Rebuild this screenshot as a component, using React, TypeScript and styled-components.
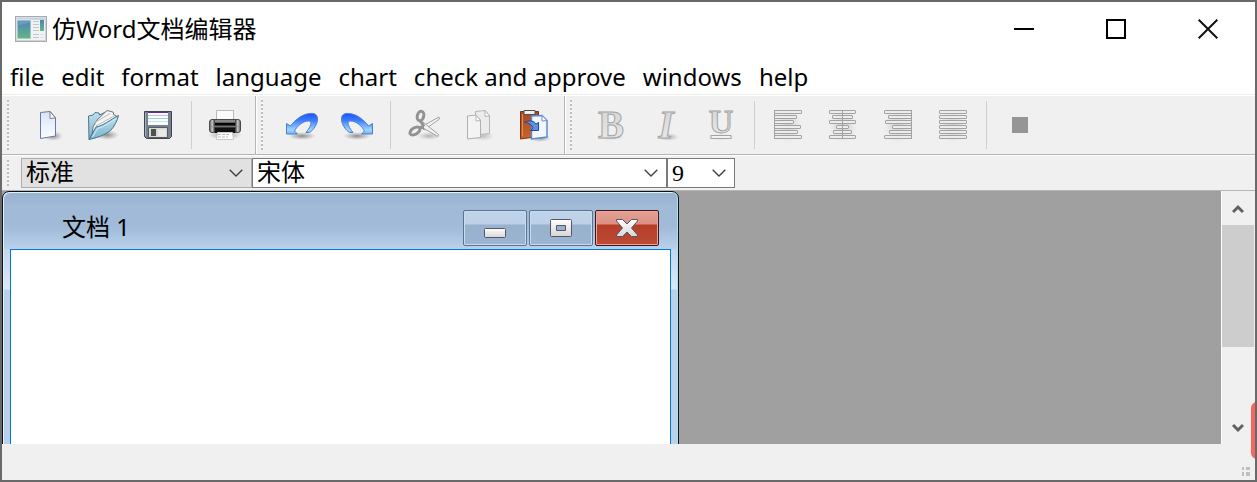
import React from 'react';
import styled, { createGlobalStyle, css } from 'styled-components';

const GlobalStyle = createGlobalStyle`
  *, *::before, *::after { box-sizing: border-box; }
  body { margin: 0; }
  button, select { font: inherit; color: inherit; }
`;

const AppWindow = styled.div`
  font-family: "Noto Sans", "Noto Sans CJK SC", sans-serif;
  position: relative;
  display: flex;
  flex-direction: column;
  height: 100vh;
  border: 2px solid #696969;
  background: #f0f0f0;
  color: #000;
  overflow: hidden;
`;

const SharedDefs = styled.svg`
  position: absolute;
`;

const TitleBar = styled.header`
  display: flex;
  align-items: center;
  height: 58px;
  flex: none;
  padding: 0 1px 4px 13px;
  background: #fff;
`;

const Title = styled.h1`
  flex: 1;
  margin: 0 0 0 5px;
  font-size: 24px;
  line-height: 32px;
  font-weight: 400;
`;

const CaptionButton = styled.button`
  display: grid;
  place-items: center;
  width: 92px;
  height: 54px;
  padding: 0;
  border: 0;
  background: none;
`;

const MenuBar = styled.nav`
  display: flex;
  gap: 17px;
  height: 34px;
  flex: none;
  padding: 0 8px;
  background: #fff;
`;

const MenuItem = styled.button`
  padding: 0;
  border: 0;
  background: none;
  font-size: 24px;
  line-height: 34px;
  white-space: nowrap;
`;

const MenuEdge = styled.div`
  flex: none;
  height: 1px;
  background: #eee;
`;

const ToolRow = styled.div`
  display: flex;
  flex: none;
  padding-left: 1px;
  border-top: 1px solid #fff;
  border-bottom: 1px solid #b4b6b4;
`;

const ToolGroup = styled.div<{ $last?: boolean }>`
  display: flex;
  align-items: center;
  height: 58px;
  ${p => !p.$last && css`
    padding-right: 3px;
    border-right: 1px solid #b4b6b4;
    box-shadow: 1px 0 0 #fff;
    margin-right: 1px;
  `}
`;

const Grip = styled.span<{ $h: number }>`
  width: 2px;
  height: ${p => p.$h}px;
  margin: 0 11px 0 4px;
  background: repeating-linear-gradient(to bottom, #bebebe 0 2px, #f7f7f7 2px 4px);
`;

const ToolButton = styled.button`
  display: grid;
  place-items: center;
  width: 55px;
  height: 50px;
  padding: 0;
  border: 0;
  background: none;
  svg { display: block; overflow: visible; }
`;

const Separator = styled.span`
  width: 1px;
  height: 48px;
  margin: 0 5px 0 6px;
  background: #cfcfcf;
`;

const FormatGroup = styled.div`
  display: flex;
  flex: 1;
  align-items: center;
  height: 34px;
`;

const ComboList = styled.div`
  display: flex;
  flex: 1;
  padding-left: 1px;
`;

const Combo = styled.span<{ $w: number; $flat?: boolean }>`
  display: grid;
  align-items: center;
  flex: 0 1 ${p => p.$w}px;
  height: 30px;
  border: 1px solid ${p => (p.$flat ? '#adadad' : '#7a7a7a')};
  background: ${p => (p.$flat ? '#e1e1e1' : '#fff')};
  > * { grid-area: 1 / 1; }
  svg { justify-self: end; margin-right: 8px; pointer-events: none; }
`;

const Select = styled.select`
  appearance: none;
  width: 100%;
  height: 28px;
  padding: 0 0 0 4px;
  border: 0;
  background: none;
  font-family: "Liberation Serif", "Noto Sans CJK SC", serif;
  font-size: 24px;
  line-height: 28px;
`;

const Workspace = styled.main`
  display: flex;
  flex: 1;
  min-height: 0;
  padding-right: 1px;
`;

const Desktop = styled.div`
  position: relative;
  flex: 1;
  overflow: hidden;
  background: #a0a0a0;
  border-right: 1px solid #fff;
`;

const DocWindow = styled.section`
  position: absolute;
  left: 0;
  top: 0;
  width: 677px;
  height: 520px;
  padding: 0 7px;
  border: 1px solid #10141a;
  border-radius: 7px 7px 0 0;
  box-shadow: inset 1px 1px 0 #dff1fb, inset -1px 0 0 #a9e2f3;
  background: linear-gradient(to bottom, #98b3d0 0, #a0bad8 16px, #a0bad8 34px, #b9d1ea 57px,
    #c4d8ee 58px, #dce8f5 97px, #b9d1ea 98px);
`;

const DocCaption = styled.div`
  display: flex;
  gap: 2px;
  height: 57px;
  padding: 18px 12px 0 52px;
`;

const DocTitle = styled.h2`
  flex: 1;
  margin: 0;
  font-size: 24px;
  line-height: 34px;
  font-weight: 400;
`;

const DocButton = styled.button<{ $close?: boolean }>`
  display: grid;
  place-items: center;
  width: 64px;
  height: 36px;
  padding: 0;
  border: 1px solid ${p => (p.$close ? '#43131a' : '#5c7390')};
  border-radius: 2px;
  box-shadow: inset 0 0 0 1px ${p => (p.$close ? '#e9a79c' : '#c9dcf0')};
  background: ${p => p.$close
    ? 'linear-gradient(#e3a195 0, #de8f83 13px, #b63e29 14px, #bb4a34 100%)'
    : 'linear-gradient(#bfd3ea 0, #bcd0e7 13px, #98b1cd 14px, #9bb4d1 100%)'};
`;

const Page = styled.div`
  height: 460px;
  border: 1px solid #0078d7;
  background: #fff;
  outline: none;
`;

const ScrollBar = styled.div`
  display: flex;
  flex-direction: column;
  width: 32px;
  background: #f0f0f0;
`;

const ScrollButton = styled.button`
  display: grid;
  place-items: center;
  height: 34px;
  padding: 0;
  border: 0;
  background: none;
`;

const ScrollTrack = styled.div`
  flex: 1;
`;

const ScrollThumb = styled.div`
  height: 66%;
  background: #cdcdcd;
`;

const StatusBar = styled.footer`
  display: flex;
  align-items: flex-end;
  justify-content: flex-end;
  flex: none;
  height: 36px;
  padding: 4px 5px;
`;

const SideBadge = styled.span`
  position: absolute;
  right: -2px;
  bottom: 21px;
  width: 6px;
  height: 57px;
  border-radius: 6px 0 0 6px;
  background: #f4685f;
`;

const Chevron = () => (
  <svg width="14" height="8" viewBox="0 0 14 8" aria-hidden="true">
    <path d="M.7.8 7 7 13.3.8" fill="none" stroke="#404040" strokeWidth="1.4" />
  </svg>
);

const Icon = ({ children }: { children: React.ReactNode }) => (
  <svg width="36" height="36" viewBox="0 0 36 36" aria-hidden="true">{children}</svg>
);

const Shadow = ({ cx = 18, cy = 31, rx = 13, ry = 3, o = 1 }) => (
  <ellipse cx={cx} cy={cy} rx={rx} ry={ry} fill="url(#shade)" opacity={o} />
);

const Defs = () => (
  <SharedDefs width="0" height="0" aria-hidden="true">
    <defs>
      <radialGradient id="shade">
        <stop offset="0" stopColor="#555" stopOpacity=".65" />
        <stop offset="1" stopColor="#777" stopOpacity="0" />
      </radialGradient>
      <linearGradient id="sheet" x1="0" y1="0" x2="0" y2="1">
        <stop offset="0" stopColor="#d9e4fb" /><stop offset="1" stopColor="#fbfdff" />
      </linearGradient>
      <linearGradient id="folder" x1="0" y1="0" x2="0" y2="1">
        <stop offset="0" stopColor="#bfe0ef" /><stop offset="1" stopColor="#79b4d0" />
      </linearGradient>
      <linearGradient id="arrow" x1="0" y1="0" x2="0" y2="1">
        <stop offset="0" stopColor="#1c50ff" /><stop offset=".35" stopColor="#3f7dff" />
        <stop offset=".8" stopColor="#9fd6ff" /><stop offset="1" stopColor="#6fb0fa" />
      </linearGradient>
      <linearGradient id="drum" x1="0" y1="0" x2="1" y2="0">
        <stop offset="0" stopColor="#55585c" /><stop offset=".09" stopColor="#c9c9c9" />
        <stop offset=".17" stopColor="#3a3a3a" /><stop offset=".83" stopColor="#3a3a3a" />
        <stop offset=".91" stopColor="#c9c9c9" /><stop offset="1" stopColor="#55585c" />
      </linearGradient>
      <linearGradient id="grey" x1="0" y1="0" x2="0" y2="1">
        <stop offset="0" stopColor="#d2d2d2" /><stop offset="1" stopColor="#ececec" />
      </linearGradient>
      <linearGradient id="wood" x1="0" y1="0" x2="0" y2="1">
        <stop offset="0" stopColor="#a94a1c" /><stop offset="1" stopColor="#c9642a" />
      </linearGradient>
      <linearGradient id="glyph" x1="0" y1="0" x2="0" y2="1">
        <stop offset="0" stopColor="#fff" /><stop offset="1" stopColor="#d6d6d6" />
      </linearGradient>
      <linearGradient id="pane" x1="0" y1="0" x2="0" y2="1">
        <stop offset="0" stopColor="#4a86b4" /><stop offset="1" stopColor="#67b487" />
      </linearGradient>
    </defs>
  </SharedDefs>
);

const AppLogo = () => (
  <svg width="32" height="26" viewBox="0 0 32 26" aria-hidden="true">
    <rect x=".5" y=".5" width="31" height="25" fill="#e6e9ec" stroke="#a5abb3" />
    <rect x="1.5" y="1.5" width="29" height="2" fill="#c9d3dd" />
    <path d="M1.500 3.500h29v21h-29z" fill="#f1f2f4" stroke="#d0d4d8" />
    <path d="M2 4h14v19H2z" fill="url(#pane)" stroke="#e2efef" />
    <path d="M2.500 9c5 0 8-2 13-2V5h-13z" fill="#78a8c8" opacity=".6" />
    <path d="M18 5.500h6M18 8.500h6M18 11.500h6M18 14.500h6M18 18.500h6M18 21.500h6" stroke="#c3c6ca" />
    <rect x="25" y="4" width="4" height="11" fill="url(#pane)" />
    <path d="M25 18.500h4M25 21.500h4" stroke="#dde0e3" />
  </svg>
);

const NewIcon = () => (
  <Icon>
    <Shadow cx={23} cy={29} rx={10} ry={5} />
    <path d="M10.500 5.500 20 4.500l5.500 6v18.500L10.500 31.500z" fill="url(#sheet)" stroke="#6479a3" />
    <path d="M20 4.500v7l5.500-.5z" fill="#fff" stroke="#7c7f8a" />
  </Icon>
);

const OpenIcon = () => (
  <Icon>
    <Shadow cx={22} cy={28} rx={12} ry={5} />
    <path d="M3.500 9 8 8l2-2.500 4 .5.500 2 7-3.500 2 3v9L4 32.500z" fill="url(#folder)" stroke="#4f7687" />
    <path d="M8 20 12 13l10-9.500L28 5l1 3 2.500 1-7 12L7 29z" fill="#f4f4f4" stroke="#777" />
    <path d="M10 15.500 25 6.500M11 19 29 9" stroke="#bbb" fill="none" />
    <path d="M4 32.500 11 20c7-1 14-7 22.500-11.500-1 5-4.500 11.500-8 15C19 29 10 31 4 32.500z" fill="url(#folder)" stroke="#416f84" />
    <path d="M7.500 30 12.500 21.500C19 20 25 15 31.500 11.500" stroke="#d6f1fb" fill="none" />
  </Icon>
);

const SaveIcon = () => (
  <Icon>
    <path d="M4.500 4.500h27v25l-2 2h-23l-2-2z" fill="#77808f" stroke="#3f4652" />
    <path d="M5.500 6v23" stroke="#a8b0bc" />
    <rect x="8" y="5" width="20" height="13" fill="#fafafa" />
    <rect x="8" y="5" width="20" height="1" fill="#5b2db8" />
    <path d="M8 8.500h20" stroke="#c4bddf" /><path d="M8 11.500h20" stroke="#8fd8cd" /><path d="M8 14.500h20" stroke="#c9e4e4" />
    <path d="M8.500 20.500h19v10h-19z" fill="#d9d9d6" stroke="#555c66" />
    <rect x="11" y="22" width="5" height="7" fill="#50524f" />
    <path d="M18 22.500h8v7h-8z" fill="#e9e9e6" />
  </Icon>
);

const PrintIcon = () => (
  <Icon>
    <Shadow cy={28} rx={17} ry={5} />
    <path d="M9.500 3.500h17v12h-17z" fill="#fafafa" stroke="#b9b9b9" />
    <rect x="2.5" y="12.5" width="31" height="13" rx="2.5" fill="url(#drum)" stroke="#4a4a4a" />
    <path d="M8 13h20v2.500H8z" fill="#888" />
    <path d="M8 16h20v2H8z" fill="#050505" />
    <path d="M3 19.500h30" stroke="#8c8c8c" opacity=".7" />
    <path d="M8 21h20v5H8z" fill="#111" />
    <path d="M10.500 25.500h15l1 7h-17z" fill="#fff" stroke="#c8c8c8" />
    <path d="M11 27.500h12M11 30h10" stroke="#bbb" strokeDasharray="3 1" />
  </Icon>
);

const UndoShape = () => (
  <>
    <Shadow cx={18} cy={29} rx={14} ry={4} />
    <path d="M2.500 16.500v10.500h11L10.500 24C13 19 19 14 24.500 14c4 .500 3 4.500-2.500 11.500h3.500C30 22.500 33.500 17 33.500 12c0-5-3.500-6-8-5.500C17.500 7.500 11 13 6.500 19z" fill="url(#arrow)" stroke="#4f7fc9" strokeLinejoin="round" />
  </>
);
const UndoIcon = () => <Icon><UndoShape /></Icon>;
const RedoIcon = () => <Icon><g transform="matrix(-1 0 0 1 36 0)"><UndoShape /></g></Icon>;

const CutIcon = () => (
  <Icon>
    <Shadow cx={23} cy={29} rx={12} ry={4} o={0.6} />
    <path d="M15 20 33 10l.5 2L18 23z" fill="#f5f5f5" stroke="#a0a0a0" />
    <path d="M17 15 32.500 27.500 31.500 29.500 15.500 20z" fill="#f0f0f0" stroke="#a0a0a0" />
    <g fill="none" stroke="#929292" strokeWidth="3">
      <ellipse cx="14.5" cy="9" rx="3.2" ry="4.8" transform="rotate(15 14.5 9)" />
      <path d="M14 13.500 18 19.500" />
      <ellipse cx="9" cy="24" rx="5.6" ry="3.2" transform="rotate(-32 9 24)" />
      <path d="M13 20.500h5" />
    </g>
  </Icon>
);

const CopyIcon = () => (
  <Icon>
    <Shadow cx={22} cy={29} rx={11} ry={5} o={0.5} />
    <path d="M14.500 4.500 24 3.500l4.500 5v18L14.500 28z" fill="#ececec" stroke="#b5b5b5" />
    <path d="M24 3.500v6l4.500-.5z" fill="#fff" stroke="#b5b5b5" />
    <path d="M6.500 9 15 8l4.500 5v17.500L6.500 32z" fill="#f3f3f3" stroke="#b0b0b0" />
    <path d="M15 8v6l4.500-.5z" fill="#fff" stroke="#b5b5b5" />
  </Icon>
);

const PasteIcon = () => (
  <Icon>
    <Shadow cx={24} cy={31} rx={11} ry={4} />
    <path d="M4.500 4.500h18v25L4.500 32z" fill="url(#wood)" stroke="#7a3413" />
    <path d="M6.500 7v22" stroke="#e08a4c" />
    <path d="M8 3.500h11v4H8z" fill="#f0f0ec" stroke="#4e4e4e" />
    <path d="M15.500 9 26 8.500l5 5V30l-15.500 2z" fill="#f2f6ff" stroke="#5b8bd6" strokeWidth="1.5" />
    <path d="M26 8.500v5.500l5-.5z" fill="#fff" stroke="#7492c2" />
    <path d="M8.500 15c5-2 10-1 11.500 2l2.500-1.500v8h-8l2.500-2.500c-1-3-4-5-8.500-6z" fill="#5f8fe0" stroke="#24479a" />
  </Icon>
);

const Letter = styled.text`
  font-family: "Liberation Serif", serif;
  font-weight: 700;
  fill: url(#grey);
  stroke: #a3a3a3;
  stroke-width: 1px;
  text-anchor: middle;
`;

const BoldIcon = () => (
  <Icon><Shadow cy={30} o={0.7} /><Letter x="18" y="31" fontSize="39">B</Letter></Icon>
);
const ItalicIcon = () => (
  <Icon><Shadow cx={20} cy={30} rx={11} ry={4} o={0.7} /><Letter x="18" y="31" fontSize="39" fontStyle="italic">I</Letter></Icon>
);
const UnderlineIcon = () => (
  <Icon>
    <Shadow cy={30} o={0.7} />
    <Letter x="18" y="26" fontSize="34">U</Letter>
    <rect x="8" y="28.5" width="20" height="3" fill="#f2f2f2" stroke="#a3a3a3" />
  </Icon>
);

const AlignIcon = ({ rows, axis }: { rows: [number, number][]; axis?: number }) => (
  <Icon>
    <Shadow cy={19} rx={14} ry={17} o={0.35} />
    {rows.map(([x, w], i) => (
      <rect key={i} x={x + 0.5} y={3.5 + i * 5} width={w} height="3" rx=".5" fill="#ededed" stroke="#a2a2a2" />
    ))}
    {axis !== undefined && <path d={`M${axis + 0.5} 3v29`} stroke="#a2a2a2" />}
  </Icon>
);

const AlignLeft = () => <AlignIcon axis={4} rows={[[4, 27], [4, 22], [4, 19], [4, 26], [4, 23], [4, 27]]} />;
const AlignCenter = () => <AlignIcon axis={17} rows={[[4, 26], [7, 20], [4, 26], [11, 12], [8, 18], [4, 26]]} />;
const AlignRight = () => <AlignIcon axis={31} rows={[[4, 27], [8, 23], [5, 26], [12, 19], [9, 22], [4, 27]]} />;
const AlignJustify = () => <AlignIcon rows={[[4, 27], [4, 27], [4, 27], [4, 27], [4, 27], [4, 27]]} />;

const ColorIcon = () => (
  <svg width="16" height="16" aria-hidden="true"><rect width="16" height="16" fill="#959595" /></svg>
);

type Tool = { label: string; icon: React.ComponentType; off?: boolean } | null;

const groups: { name: string; tools: Tool[] }[] = [
  { name: 'File', tools: [
    { label: 'New', icon: NewIcon }, { label: 'Open', icon: OpenIcon }, { label: 'Save', icon: SaveIcon },
    null, { label: 'Print', icon: PrintIcon },
  ] },
  { name: 'Edit', tools: [
    { label: 'Undo', icon: UndoIcon }, { label: 'Redo', icon: RedoIcon }, null,
    { label: 'Cut', icon: CutIcon, off: true }, { label: 'Copy', icon: CopyIcon, off: true }, { label: 'Paste', icon: PasteIcon },
  ] },
  { name: 'Format', tools: [
    { label: 'Bold', icon: BoldIcon, off: true }, { label: 'Italic', icon: ItalicIcon, off: true },
    { label: 'Underline', icon: UnderlineIcon, off: true }, null,
    { label: 'Align left', icon: AlignLeft, off: true }, { label: 'Align center', icon: AlignCenter, off: true },
    { label: 'Align right', icon: AlignRight, off: true }, { label: 'Justify', icon: AlignJustify, off: true }, null,
    { label: 'Text color', icon: ColorIcon, off: true },
  ] },
];

const menus = ['file', 'edit', 'format', 'language', 'chart', 'check and approve', 'windows', 'help'];

const combos = [
  { label: 'Style', value: '标准', width: 231, flat: true },
  { label: 'Font', value: '宋体', width: 415 },
  { label: 'Size', value: '9', width: 68 },
];

const ScrollArrow = ({ down }: { down?: boolean }) => (
  <svg width="12" height="12" viewBox="0 0 12 12" aria-hidden="true">
    <path d={down ? 'M1 4 6 9 11 4' : 'M1 10 6 5 11 10'} fill="none" stroke="#606060" strokeWidth="3" />
  </svg>
);

export default function App() {
  return (
    <AppWindow>
      <GlobalStyle />
      <Defs />
      <TitleBar>
        <AppLogo />
        <Title>仿Word文档编辑器</Title>
        <CaptionButton aria-label="Minimize">
          <svg width="20" height="20"><path d="M0 10h20" stroke="#000" strokeWidth="2" /></svg>
        </CaptionButton>
        <CaptionButton aria-label="Maximize">
          <svg width="20" height="20"><rect x="1" y="1" width="18" height="18" fill="none" stroke="#000" strokeWidth="2" /></svg>
        </CaptionButton>
        <CaptionButton aria-label="Close">
          <svg width="20" height="20"><path d="M.7.7l18.600 18.600M19.300.7.7 19.300" stroke="#111" strokeWidth="2" /></svg>
        </CaptionButton>
      </TitleBar>
      <MenuBar>
        {menus.map(m => <MenuItem key={m}>{m}</MenuItem>)}
      </MenuBar>
      <MenuEdge />
      <ToolRow>
        {groups.map((g, gi) => (
          <ToolGroup key={g.name} $last={gi === groups.length - 1} role="toolbar" aria-label={g.name}>
            <Grip $h={50} />
            {g.tools.map((t, i) => t
              ? <ToolButton key={i} aria-label={t.label} disabled={t.off}><t.icon /></ToolButton>
              : <Separator key={i} />)}
          </ToolGroup>
        ))}
      </ToolRow>
      <ToolRow>
        <FormatGroup>
          <Grip $h={26} />
          <ComboList>
            {combos.map(c => (
              <Combo key={c.label} $w={c.width} $flat={c.flat}>
                <Select aria-label={c.label}><option>{c.value}</option></Select>
                <Chevron />
              </Combo>
            ))}
          </ComboList>
        </FormatGroup>
      </ToolRow>
      <Workspace>
        <Desktop>
          <DocWindow>
            <DocCaption>
              <DocTitle>文档 1</DocTitle>
              <DocButton aria-label="Minimize document">
                <svg width="24" height="22"><rect x="1.5" y="11.5" width="21" height="9" rx="1" fill="url(#glyph)" stroke="#535666" /></svg>
              </DocButton>
              <DocButton aria-label="Maximize document">
                <svg width="22" height="18">
                  <path fillRule="evenodd" d="M1.500.5h19a1 1 0 0 1 1 1v15a1 1 0 0 1-1 1h-19a1 1 0 0 1-1-1v-15a1 1 0 0 1 1-1zM6.500 6.500v5h9v-5z" fill="url(#glyph)" stroke="#535666" />
                </svg>
              </DocButton>
              <DocButton $close aria-label="Close document">
                <svg width="24" height="20" viewBox="0 0 24 20">
                  <path d="M1.500 1.500h6L12 6l4.500-4.500h6V3l-6 7 6 7v1.500h-6L12 14l-4.500 4.500h-6V17l6-7-6-7z" fill="url(#glyph)" stroke="#535666" />
                </svg>
              </DocButton>
            </DocCaption>
            <Page contentEditable suppressContentEditableWarning role="textbox" aria-label="文档 1" />
          </DocWindow>
        </Desktop>
        <ScrollBar>
          <ScrollButton aria-label="Scroll up"><ScrollArrow /></ScrollButton>
          <ScrollTrack><ScrollThumb /></ScrollTrack>
          <ScrollButton aria-label="Scroll down"><ScrollArrow down /></ScrollButton>
        </ScrollBar>
      </Workspace>
      <StatusBar>
        <svg width="8" height="9" fill="#bfbfbf" aria-hidden="true">
          <path d="M0 0h2v3H0zM4 0h4v3H4zM0 5h2v4H0zM4 5h4v4H4z" />
        </svg>
      </StatusBar>
      <SideBadge />
    </AppWindow>
  );
}
